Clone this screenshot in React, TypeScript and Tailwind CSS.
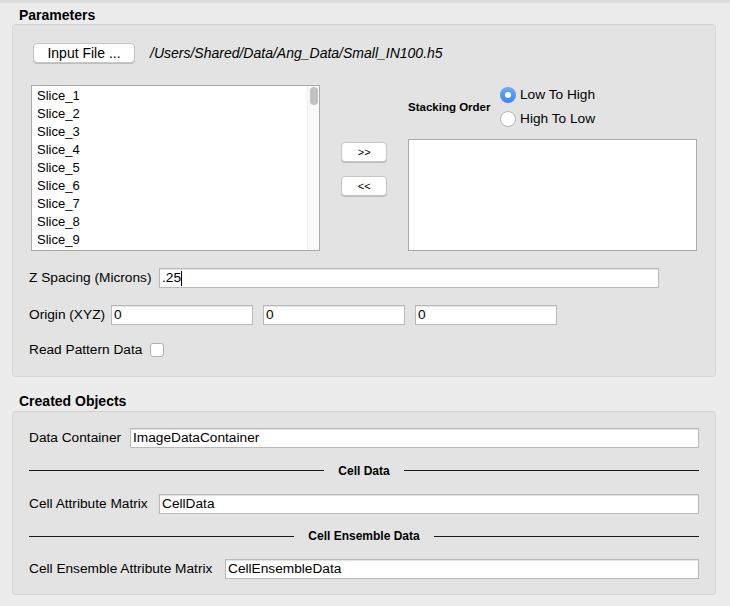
import React from 'react';

const slices = ['Slice_1', 'Slice_2', 'Slice_3', 'Slice_4', 'Slice_5', 'Slice_6', 'Slice_7', 'Slice_8', 'Slice_9'];

function TextField({ value, className = '', caret = false }: { value: string; className?: string; caret?: boolean }) {
  return (
    <div className={`h-[20px] bg-white border border-[#b9b9b9] shadow-[inset_0_1px_0_#e4e4e4] flex items-center pl-[2px] text-[13.7px] text-black ${className}`}>
      <span>{value}</span>
      {caret && <span className="w-px h-[15px] bg-black" />}
    </div>
  );
}

function PushButton({ children, className = '' }: { children: React.ReactNode; className?: string }) {
  return (
    <button className={`h-[20px] bg-white border border-[#c6c6c6] rounded-[4px] shadow-[0_1px_0_#bdbdbd] flex items-center justify-center text-black ${className}`}>
      {children}
    </button>
  );
}

function Divider({ label }: { label: string }) {
  return (
    <div className="flex items-center h-[14px]">
      <div className="flex-1 h-px bg-[#1a1a1a]" />
      <span className="px-[14px] text-[12px] font-bold text-black">{label}</span>
      <div className="flex-1 h-px bg-[#1a1a1a]" />
    </div>
  );
}

export default function App() {
  return (
    <div className="w-[730px] h-[606px] bg-[#ececec] overflow-hidden text-black" style={{ fontFamily: '"Liberation Sans", Arial, sans-serif' }}>
      <div className="h-[3px] bg-[#dedede]" />

      {/* Parameters */}
      <div className="h-[21px] flex items-center pt-[3px] pl-[19px] text-[14px] font-bold">Parameters</div>
      <div className="ml-[12px] w-[704px] h-[353px] bg-[#e3e3e3] border border-[#d8d8d8] border-t-[#d2d2d2] rounded-[4px] pt-[18px] pl-[16px] pr-[18px]">
        <div className="flex items-center h-[20px]">
          <PushButton className="ml-[4px] w-[102px] text-[14px]">Input File ...</PushButton>
          <span className="ml-[15px] text-[14px] italic">/Users/Shared/Data/Ang_Data/Small_IN100.h5</span>
        </div>

        <div className="flex mt-[22px] ml-[2px]">
          <div className="w-[290px] h-[166px] bg-white border border-[#ababab] flex">
            <div className="flex-1 pt-[1px] pl-[5px]">
              {slices.map(s => (
                <div key={s} className="h-[18px] leading-[18px] text-[13px]">{s}</div>
              ))}
            </div>
            <div className="w-[12px] bg-[#fafafa] border-l border-[#ededed] pt-[1px] flex justify-center">
              <div className="w-[8px] h-[18px] rounded-full bg-[#c2c2c2]" />
            </div>
          </div>

          <div className="w-[88px] pl-[21px] pt-[57px] flex flex-col gap-[14px]">
            <PushButton className="w-[46px] text-[11px]">&gt;&gt;</PushButton>
            <PushButton className="w-[46px] text-[11px]">&lt;&lt;</PushButton>
          </div>

          <div className="w-[289px] flex flex-col">
            <div className="h-[54px] flex items-start">
              <span className="mt-[14px] w-[92px] text-[11.5px] font-bold">Stacking Order</span>
              <div className="flex flex-col gap-[8px] pt-[2px]">
                <div className="flex items-center h-[16px]">
                  <div className="w-[16px] h-[16px] rounded-full bg-gradient-to-b from-[#6aa9f7] to-[#3f86f2] flex items-center justify-center">
                    <div className="w-[6px] h-[6px] rounded-full bg-white" />
                  </div>
                  <span className="ml-[4px] text-[13.7px]">Low To High</span>
                </div>
                <div className="flex items-center h-[16px]">
                  <div className="w-[16px] h-[16px] rounded-full bg-white border border-[#b4b4b4]" />
                  <span className="ml-[4px] text-[13.7px]">High To Low</span>
                </div>
              </div>
            </div>
            <div className="w-[289px] h-[112px] bg-white border border-[#ababab]" />
          </div>
        </div>

        <div className="flex items-center mt-[17px]">
          <span className="text-[13.7px] w-[130px]">Z Spacing (Microns)</span>
          <TextField value=".25" caret className="w-[500px]" />
        </div>

        <div className="flex items-center mt-[16px]">
          <span className="text-[13.7px] w-[82px]">Origin (XYZ)</span>
          <div className="flex gap-[10px]">
            <TextField value="0" className="w-[142px]" />
            <TextField value="0" className="w-[142px]" />
            <TextField value="0" className="w-[142px]" />
          </div>
        </div>

        <div className="flex items-center mt-[16px] h-[18px]">
          <span className="text-[13.7px]">Read Pattern Data</span>
          <div className="ml-[8px] w-[14px] h-[14px] bg-white border border-[#b0b0b0] rounded-[3px]" />
        </div>
      </div>

      {/* Created Objects */}
      <div className="h-[34px] pt-[14px] pl-[19px] text-[14px] leading-[20px] font-bold">Created Objects</div>
      <div className="ml-[12px] w-[704px] h-[184px] bg-[#e3e3e3] border border-[#d8d8d8] border-t-[#d2d2d2] rounded-[4px] pt-[16px] pl-[16px] pr-[16px]">
        <div className="flex items-center">
          <span className="text-[13.7px] w-[101px]">Data Container</span>
          <TextField value="ImageDataContainer" className="flex-1" />
        </div>
        <div className="mt-[15px]">
          <Divider label="Cell Data" />
        </div>
        <div className="flex items-center mt-[16px]">
          <span className="text-[13.7px] w-[130px]">Cell Attribute Matrix</span>
          <TextField value="CellData" className="flex-1" />
        </div>
        <div className="mt-[15px]">
          <Divider label="Cell Ensemble Data" />
        </div>
        <div className="flex items-center mt-[16px]">
          <span className="text-[13.7px] w-[196px]">Cell Ensemble Attribute Matrix</span>
          <TextField value="CellEnsembleData" className="flex-1" />
        </div>
      </div>
    </div>
  );
}
